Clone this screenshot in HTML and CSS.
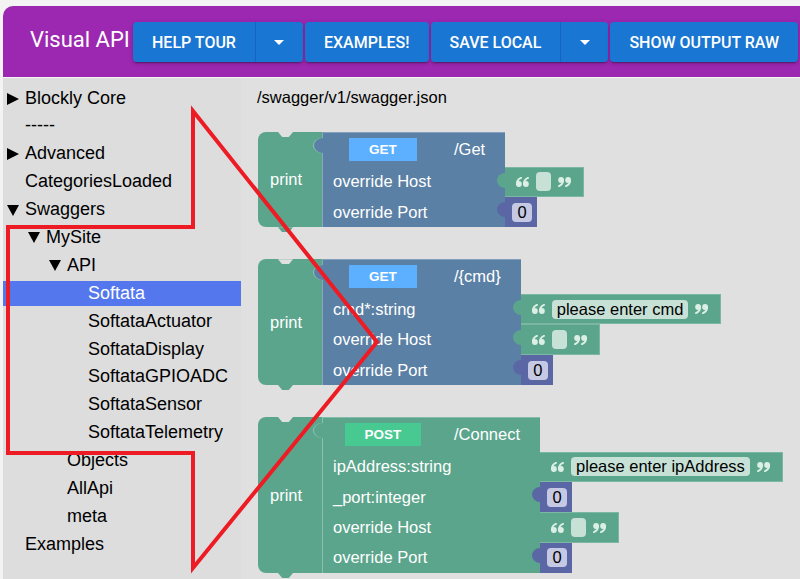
FILE: index.html
```html
<!DOCTYPE html>
<html lang="en">
<head>
  <meta charset="UTF-8">
  <meta name="viewport" content="width=device-width, initial-scale=1.0">
  <title>Visual API</title>
  <link rel="stylesheet" href="styles.css">
</head>
<body>
  <svg class="defs" width="0" height="0" aria-hidden="true">
    <symbol id="q-open" viewBox="0 0 13 10">
      <circle cx="2.9" cy="7" r="2.9"/>
      <path d="M0.9 7 Q0.9 2.6 5 0.9" fill="none" stroke="currentColor" stroke-width="2" stroke-linecap="round"/>
      <circle cx="9.9" cy="7" r="2.9"/>
      <path d="M7.9 7 Q7.9 2.6 12 0.9" fill="none" stroke="currentColor" stroke-width="2" stroke-linecap="round"/>
    </symbol>
    <symbol id="q-close" viewBox="0 0 13 10">
      <g transform="rotate(180 6.5 5)">
        <circle cx="2.9" cy="7" r="2.9"/>
        <path d="M0.9 7 Q0.9 2.6 5 0.9" fill="none" stroke="currentColor" stroke-width="2" stroke-linecap="round"/>
        <circle cx="9.9" cy="7" r="2.9"/>
        <path d="M7.9 7 Q7.9 2.6 12 0.9" fill="none" stroke="currentColor" stroke-width="2" stroke-linecap="round"/>
      </g>
    </symbol>
  </svg>

  <div class="app">
    <header class="topbar">
      <div class="brand">Visual API</div>
      <div class="btn-group">
        <button class="btn">Help tour</button>
        <button class="btn btn--drop"><span class="caret"></span></button>
      </div>
      <button class="btn">Examples!</button>
      <div class="btn-group">
        <button class="btn">Save local</button>
        <button class="btn btn--drop"><span class="caret"></span></button>
      </div>
      <button class="btn">Show output raw</button>
    </header>

    <div class="main">
      <nav class="toolbox">
        <div class="cat lvl-0"><span class="tw tw--closed"></span>Blockly Core</div>
        <div class="cat lvl-0"><span class="tw"></span>-----</div>
        <div class="cat lvl-0"><span class="tw tw--closed"></span>Advanced</div>
        <div class="cat lvl-0"><span class="tw"></span>CategoriesLoaded</div>
        <div class="cat lvl-0"><span class="tw tw--open"></span>Swaggers</div>
        <div class="cat lvl-1"><span class="tw tw--open"></span>MySite</div>
        <div class="cat lvl-2"><span class="tw tw--open"></span>API</div>
        <div class="cat lvl-3 cat--selected"><span class="tw"></span>Softata</div>
        <div class="cat lvl-3"><span class="tw"></span>SoftataActuator</div>
        <div class="cat lvl-3"><span class="tw"></span>SoftataDisplay</div>
        <div class="cat lvl-3"><span class="tw"></span>SoftataGPIOADC</div>
        <div class="cat lvl-3"><span class="tw"></span>SoftataSensor</div>
        <div class="cat lvl-3"><span class="tw"></span>SoftataTelemetry</div>
        <div class="cat lvl-2"><span class="tw"></span>Objects</div>
        <div class="cat lvl-2"><span class="tw"></span>AllApi</div>
        <div class="cat lvl-2"><span class="tw"></span>meta</div>
        <div class="cat lvl-0"><span class="tw"></span>Examples</div>
      </nav>

      <section class="workspace">
        <div class="src">/swagger/v1/swagger.json</div>

        <div class="stack">
          <!-- GET /Get -->
          <div class="stmt">
            <div class="print">print</div>
            <div class="call">
              <div class="call-head"><span class="method-slot"><span class="method">GET</span></span><span class="path">/Get</span></div>
              <div class="arg">override Host</div>
              <div class="input text-block">
                <svg class="quote"><use href="#q-open"/></svg>
                <span class="field field--empty"></span>
                <svg class="quote"><use href="#q-close"/></svg>
              </div>
              <div class="arg">override Port</div>
              <div class="input num-block"><span class="num">0</span></div>
            </div>
          </div>

          <!-- GET /{cmd} -->
          <div class="stmt">
            <div class="print">print</div>
            <div class="call">
              <div class="call-head"><span class="method-slot"><span class="method">GET</span></span><span class="path">/{cmd}</span></div>
              <div class="arg">cmd*:string</div>
              <div class="input text-block">
                <svg class="quote"><use href="#q-open"/></svg>
                <span class="field">please enter cmd</span>
                <svg class="quote"><use href="#q-close"/></svg>
              </div>
              <div class="arg">override Host</div>
              <div class="input text-block">
                <svg class="quote"><use href="#q-open"/></svg>
                <span class="field field--empty"></span>
                <svg class="quote"><use href="#q-close"/></svg>
              </div>
              <div class="arg">override Port</div>
              <div class="input num-block"><span class="num">0</span></div>
            </div>
          </div>

          <!-- POST /Connect -->
          <div class="stmt">
            <div class="print">print</div>
            <div class="call call--post">
              <div class="call-head"><span class="method-slot"><span class="method method--post">POST</span></span><span class="path">/Connect</span></div>
              <div class="arg">ipAddress:string</div>
              <div class="input text-block">
                <svg class="quote"><use href="#q-open"/></svg>
                <span class="field">please enter ipAddress</span>
                <svg class="quote"><use href="#q-close"/></svg>
              </div>
              <div class="arg">_port:integer</div>
              <div class="input num-block"><span class="num">0</span></div>
              <div class="arg">override Host</div>
              <div class="input text-block">
                <svg class="quote"><use href="#q-open"/></svg>
                <span class="field field--empty"></span>
                <svg class="quote"><use href="#q-close"/></svg>
              </div>
              <div class="arg">override Port</div>
              <div class="input num-block"><span class="num">0</span></div>
            </div>
          </div>
        </div>
      </section>
    </div>
  </div>

  <!-- red callout arrow drawn over the screenshot -->
  <svg class="callout" viewBox="0 0 800 579" width="800" height="579">
    <polygon points="193,111 377,342 193,568 193,453 8,453 8,227 193,227"/>
  </svg>
</body>
</html>
```

FILE: styles.css
```css
body {
  margin: 0;
  background: #f3f3f3;
  font-family: "Liberation Sans", Arial, sans-serif;
  overflow: hidden;
}

.defs {
  position: absolute;
}

.app {
  margin: 6px 0 0 3px;
  height: calc(100vh - 6px);
  display: flex;
  flex-direction: column;
}

/* top bar */
.topbar {
  flex: none;
  height: 71px;
  display: flex;
  align-items: center;
  gap: 2px;
  padding-left: 27px;
  background: #9c27b0;
  border-top-left-radius: 10px;
  box-sizing: border-box;
}

.brand {
  flex: 0 0 101px;
  font-family: Roboto, sans-serif;
  font-size: 22px;
  color: #fff;
  white-space: nowrap;
  padding-bottom: 4px;
}

.btn-group {
  display: flex;
  margin-top: 1px;
  border-radius: 4px;
  box-shadow: 0 3px 1px -2px rgba(0, 0, 0, 0.2), 0 2px 2px 0 rgba(0, 0, 0, 0.14), 0 1px 5px 0 rgba(0, 0, 0, 0.12);
}

.btn {
  height: 40px;
  padding: 0 19px;
  border: none;
  border-radius: 4px;
  background: #1976d2;
  color: #fff;
  font-family: Roboto, sans-serif;
  font-size: 16px;
  font-weight: 500;
  text-transform: uppercase;
  white-space: nowrap;
  box-shadow: 0 3px 1px -2px rgba(0, 0, 0, 0.2), 0 2px 2px 0 rgba(0, 0, 0, 0.14), 0 1px 5px 0 rgba(0, 0, 0, 0.12);
}

.topbar > .btn {
  margin-top: 1px;
}

.btn-group .btn {
  box-shadow: none;
}

.btn-group .btn:first-child {
  border-radius: 4px 0 0 4px;
  border-right: 1px solid #1565c0;
}

.btn--drop {
  width: 47px;
  padding: 0;
  display: flex;
  align-items: center;
  justify-content: center;
}

.btn-group .btn--drop {
  border-radius: 0 4px 4px 0;
}

.caret {
  width: 0;
  height: 0;
  border-top: 5px solid #fff;
  border-left: 5px solid transparent;
  border-right: 5px solid transparent;
}

/* main area */
.main {
  flex: 1;
  display: flex;
  min-height: 0;
  margin-top: 1px;
}

.toolbox {
  flex: 0 0 238px;
  background: #dddddd;
  padding-top: 7.5px;
  box-sizing: border-box;
}

.cat {
  display: flex;
  align-items: center;
  height: 25px;
  margin-bottom: 2.9px;
  font-size: 18px;
  color: #000;
  white-space: nowrap;
}

.cat--selected {
  background: #5577ee;
  color: #fff;
}

.lvl-0 { padding-left: 4px; }
.lvl-1 { padding-left: 25px; }
.lvl-2 { padding-left: 46px; }
.lvl-3 { padding-left: 67px; }

.tw {
  flex: 0 0 18px;
  height: 11px;
  position: relative;
}

.tw--closed::before {
  content: "";
  position: absolute;
  left: 0;
  top: 0;
  border-left: 12px solid #000;
  border-top: 6px solid transparent;
  border-bottom: 6px solid transparent;
}

.tw--open::before {
  content: "";
  position: absolute;
  left: 0;
  top: 0.5px;
  border-top: 11px solid #000;
  border-left: 6px solid transparent;
  border-right: 6px solid transparent;
}

/* workspace */
.workspace {
  flex: 1;
  background: #e0e0e0;
  padding: 10px 0 0 16px;
}

.src {
  font-size: 16.5px;
  line-height: 19px;
  color: #000;
  margin-bottom: 25px;
}

.stack {
  display: flex;
  flex-direction: column;
  align-items: flex-start;
  gap: 32px;
  margin-left: 1px;
}

.stmt {
  display: flex;
  font-size: 16.5px;
  color: #fff;
}

.print {
  flex: 0 0 64px;
  box-sizing: border-box;
  display: flex;
  align-items: center;
  padding-left: 12px;
  background: #5ba58c;
  border-radius: 8px 0 0 8px;
  position: relative;
}

.print::before,
.print::after {
  content: "";
  position: absolute;
  left: 20px;
  width: 15px;
  height: 5px;
  clip-path: polygon(0 0, 100% 0, 72% 100%, 28% 100%);
}

.print::before {
  top: 0;
  background: #e0e0e0;
}

.print::after {
  top: 100%;
  background: #5ba58c;
}

.call {
  --c: #5b80a5;
  display: grid;
  grid-template-columns: max-content max-content;
}

.call--post {
  --c: #5ba58c;
}

.call-head,
.arg {
  grid-column: 1;
  background: var(--c);
  border-left: 1px solid rgba(255, 255, 255, 0.3);
}

.call-head {
  height: 34.5px;
  display: flex;
  align-items: center;
  padding: 0 20px 0 10px;
  position: relative;
  border-top: 1px solid rgba(255, 255, 255, 0.25);
  box-sizing: border-box;
}

.call-head::before {
  content: "";
  position: absolute;
  left: -9px;
  top: 5px;
  width: 9px;
  height: 15px;
  background: var(--c);
  border-radius: 9px 0 0 9px / 7.5px 0 0 7.5px;
  box-shadow: -1px 0 0 rgba(255, 255, 255, 0.3);
}

.method-slot {
  width: 100px;
  display: flex;
  justify-content: center;
}

.method {
  height: 23px;
  line-height: 23px;
  padding: 0 20px;
  background: #5cb0ff;
  font-size: 13.5px;
  font-weight: bold;
}

.method--post {
  background: #48c991;
}

.path {
  margin-left: 21px;
}

.arg {
  display: flex;
  align-items: center;
  padding-left: 10px;
}

.arg:last-of-type {
  border-bottom: 1px solid rgba(255, 255, 255, 0.2);
}

.input {
  grid-column: 2;
  justify-self: start;
  position: relative;
  display: flex;
  align-items: center;
  box-sizing: border-box;
}

.input::before {
  content: "";
  position: absolute;
  left: -8px;
  top: 5px;
  width: 8px;
  height: 15px;
  border-radius: 8px 0 0 8px / 7.5px 0 0 7.5px;
}

.text-block {
  height: 30.7px;
  padding: 0 12px 0 11px;
  gap: 7px;
  background: #5ba58c;
  border: 1px solid rgba(255, 255, 255, 0.2);
  border-left: none;
}

.text-block::before {
  background: #5ba58c;
}

.quote {
  width: 13px;
  height: 10px;
  fill: #dcefe7;
  color: #dcefe7;
}

.field {
  height: 19px;
  line-height: 19px;
  padding: 0 5px;
  border-radius: 4px;
  background: #c7e1d6;
  color: #000;
  white-space: nowrap;
}

.field--empty {
  width: 15px;
  padding: 0;
}

.num-block {
  height: 30px;
  padding: 0 5px 0 7px;
  background: #5b67a5;
}

.num-block::before {
  background: #5b67a5;
}

.num {
  width: 20px;
  height: 19px;
  line-height: 19px;
  border-radius: 4px;
  background: #c6c9e4;
  color: #000;
  text-align: center;
}

/* annotation */
.callout {
  position: absolute;
  left: 0;
  top: 0;
  pointer-events: none;
}

.callout polygon {
  fill: none;
  stroke: #ed1c24;
  stroke-width: 4;
  stroke-linejoin: miter;
}
```
